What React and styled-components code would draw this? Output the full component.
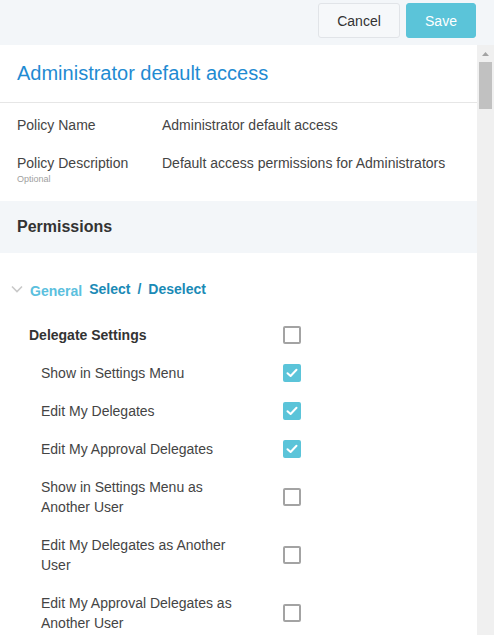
import React from "react";
import styled, { createGlobalStyle } from "styled-components";

const GlobalStyle = createGlobalStyle`
  html, body { margin: 0; padding: 0; }
  body {
    font-family: "Liberation Sans", Arial, sans-serif;
    color: #333;
    background: #fff;
    overflow: hidden;
  }
  * { box-sizing: border-box; }
`;

const Page = styled.div`
  display: flex;
  flex-direction: column;
  height: 635px;
  width: 494px;
`;

const TopBar = styled.div`
  flex: 0 0 45px;
  display: flex;
  justify-content: flex-end;
  align-items: flex-start;
  gap: 6px;
  padding: 3px 18px 0 0;
  background: #f3f6f9;
`;

const Button = styled.button`
  height: 35px;
  width: ${(p) => (p.$primary ? "70px" : "82px")};
  padding: 0;
  font-family: inherit;
  font-size: 14px;
  border-radius: 3px;
  cursor: pointer;
  border: 1px solid ${(p) => (p.$primary ? "#5bc4d9" : "#e1e4e8")};
  background: ${(p) => (p.$primary ? "#5bc4d9" : "#f6f8fa")};
  color: ${(p) => (p.$primary ? "#fff" : "#333")};
`;

const Body = styled.div`
  flex: 1 1 auto;
  display: flex;
  min-height: 0;
`;

const Content = styled.div`
  flex: 1 1 auto;
  overflow: hidden;
  background: #fff;
`;

/* Classic scrollbar rail drawn beside the content pane */
const Rail = styled.div`
  flex: 0 0 17px;
  display: flex;
  flex-direction: column;
  align-items: center;
  background: #f0f0f0;
`;

const RailArrow = styled.div`
  height: 17px;
  width: 17px;
  display: flex;
  align-items: center;
  justify-content: center;
`;

const RailThumb = styled.div`
  width: 13px;
  height: 47px;
  background: #c1c1c1;
`;

const TitleBar = styled.div`
  padding: 16px 17px 17px;
  border-bottom: 1px solid #e6e6e6;
`;

const Title = styled.h1`
  margin: 0;
  font-size: 20px;
  line-height: 24px;
  font-weight: normal;
  color: #1f8bd2;
`;

const InfoSection = styled.div`
  display: flex;
  flex-direction: column;
  gap: 18px;
  padding: 12px 17px 16px;
`;

const InfoRow = styled.div`
  display: grid;
  grid-template-columns: 145px 1fr;
  font-size: 14px;
  line-height: 20px;
  color: #444;
`;

const FieldLabel = styled.div`
  display: flex;
  flex-direction: column;
`;

const Hint = styled.span`
  font-size: 9px;
  line-height: 12px;
  color: #a0a0a0;
`;

const Band = styled.div`
  height: 52px;
  display: flex;
  align-items: center;
  padding: 0 17px;
  background: #f3f6f9;
  font-size: 16px;
  font-weight: bold;
  color: #333;
`;

const GroupHeader = styled.div`
  display: flex;
  align-items: center;
  height: 20px;
  box-sizing: content-box;
  padding: 26px 0 17px 11px;
  font-size: 14px;
  font-weight: bold;
`;

const Chevron = styled.svg`
  width: 12px;
  height: 8px;
  margin-right: 7px;
  flex: 0 0 auto;
`;

const GroupName = styled.span`
  color: #5bc0de;
  margin-top: 3px;
  margin-right: 7px;
`;

const Link = styled.a`
  color: #1a8ab6;
  text-decoration: none;
  cursor: pointer;
`;

const Slash = styled.span`
  color: #1a8ab6;
  margin: 0 7px;
`;

const Row = styled.div`
  display: flex;
  align-items: center;
  padding: 9px 0 9px 29px;
`;

const RowLabel = styled.div`
  width: 221px;
  padding-left: ${(p) => (p.$child ? "12px" : "0")};
  font-size: 14px;
  line-height: 20px;
  font-weight: ${(p) => (p.$child ? "normal" : "bold")};
  color: ${(p) => (p.$child ? "#444" : "#333")};
`;

const Box = styled.span`
  flex: 0 0 auto;
  width: 18px;
  height: 18px;
  margin-left: 33px;
  border-radius: 2px;
  display: flex;
  align-items: center;
  justify-content: center;
  border: 2px solid ${(p) => (p.$checked ? "#5bc4d9" : "#a3a3a3")};
  background: ${(p) => (p.$checked ? "#5bc4d9" : "#fff")};
`;

const Checkbox = ({ checked }) => (
  <Box $checked={checked}>
    {checked && (
      <svg width="12" height="10" viewBox="0 0 12 10">
        <polyline
          points="1.5,5.2 4.6,8 10.5,1.8"
          fill="none"
          stroke="#fff"
          strokeWidth="2"
          strokeLinecap="round"
          strokeLinejoin="round"
        />
      </svg>
    )}
  </Box>
);

const groups = [
  {
    name: "General",
    sections: [
      {
        name: "Delegate Settings",
        checked: false,
        items: [
          { label: "Show in Settings Menu", checked: true },
          { label: "Edit My Delegates", checked: true },
          { label: "Edit My Approval Delegates", checked: true },
          { label: "Show in Settings Menu as Another User", checked: false },
          { label: "Edit My Delegates as Another User", checked: false },
          { label: "Edit My Approval Delegates as Another User", checked: false },
        ],
      },
    ],
  },
];

const Group = ({ group }) => (
  <div>
    <GroupHeader>
      <Chevron viewBox="0 0 12 8">
        <polyline points="1,1.5 6,6.5 11,1.5" fill="none" stroke="#c9c9c9" strokeWidth="1.6" />
      </Chevron>
      <GroupName>{group.name}</GroupName>
      <Link>Select</Link>
      <Slash>/</Slash>
      <Link>Deselect</Link>
    </GroupHeader>
    {group.sections.map((s) => (
      <div key={s.name}>
        <Row>
          <RowLabel>{s.name}</RowLabel>
          <Checkbox checked={s.checked} />
        </Row>
        {s.items.map((it) => (
          <Row key={it.label}>
            <RowLabel $child>{it.label}</RowLabel>
            <Checkbox checked={it.checked} />
          </Row>
        ))}
      </div>
    ))}
  </div>
);

export default function App() {
  return (
    <Page>
      <GlobalStyle />
      <TopBar>
        <Button>Cancel</Button>
        <Button $primary>Save</Button>
      </TopBar>
      <Body>
        <Content>
          <TitleBar>
            <Title>Administrator default access</Title>
          </TitleBar>
          <InfoSection>
            <InfoRow>
              <FieldLabel>Policy Name</FieldLabel>
              <div>Administrator default access</div>
            </InfoRow>
            <InfoRow>
              <FieldLabel>
                Policy Description
                <Hint>Optional</Hint>
              </FieldLabel>
              <div>Default access permissions for Administrators</div>
            </InfoRow>
          </InfoSection>
          <Band>Permissions</Band>
          {groups.map((g) => (
            <Group key={g.name} group={g} />
          ))}
        </Content>
        <Rail>
          <RailArrow>
            <svg width="7" height="4" viewBox="0 0 7 4">
              <polygon points="0,4 3.5,0 7,4" fill="#a3a3a3" />
            </svg>
          </RailArrow>
          <RailThumb />
        </Rail>
      </Body>
    </Page>
  );
}
